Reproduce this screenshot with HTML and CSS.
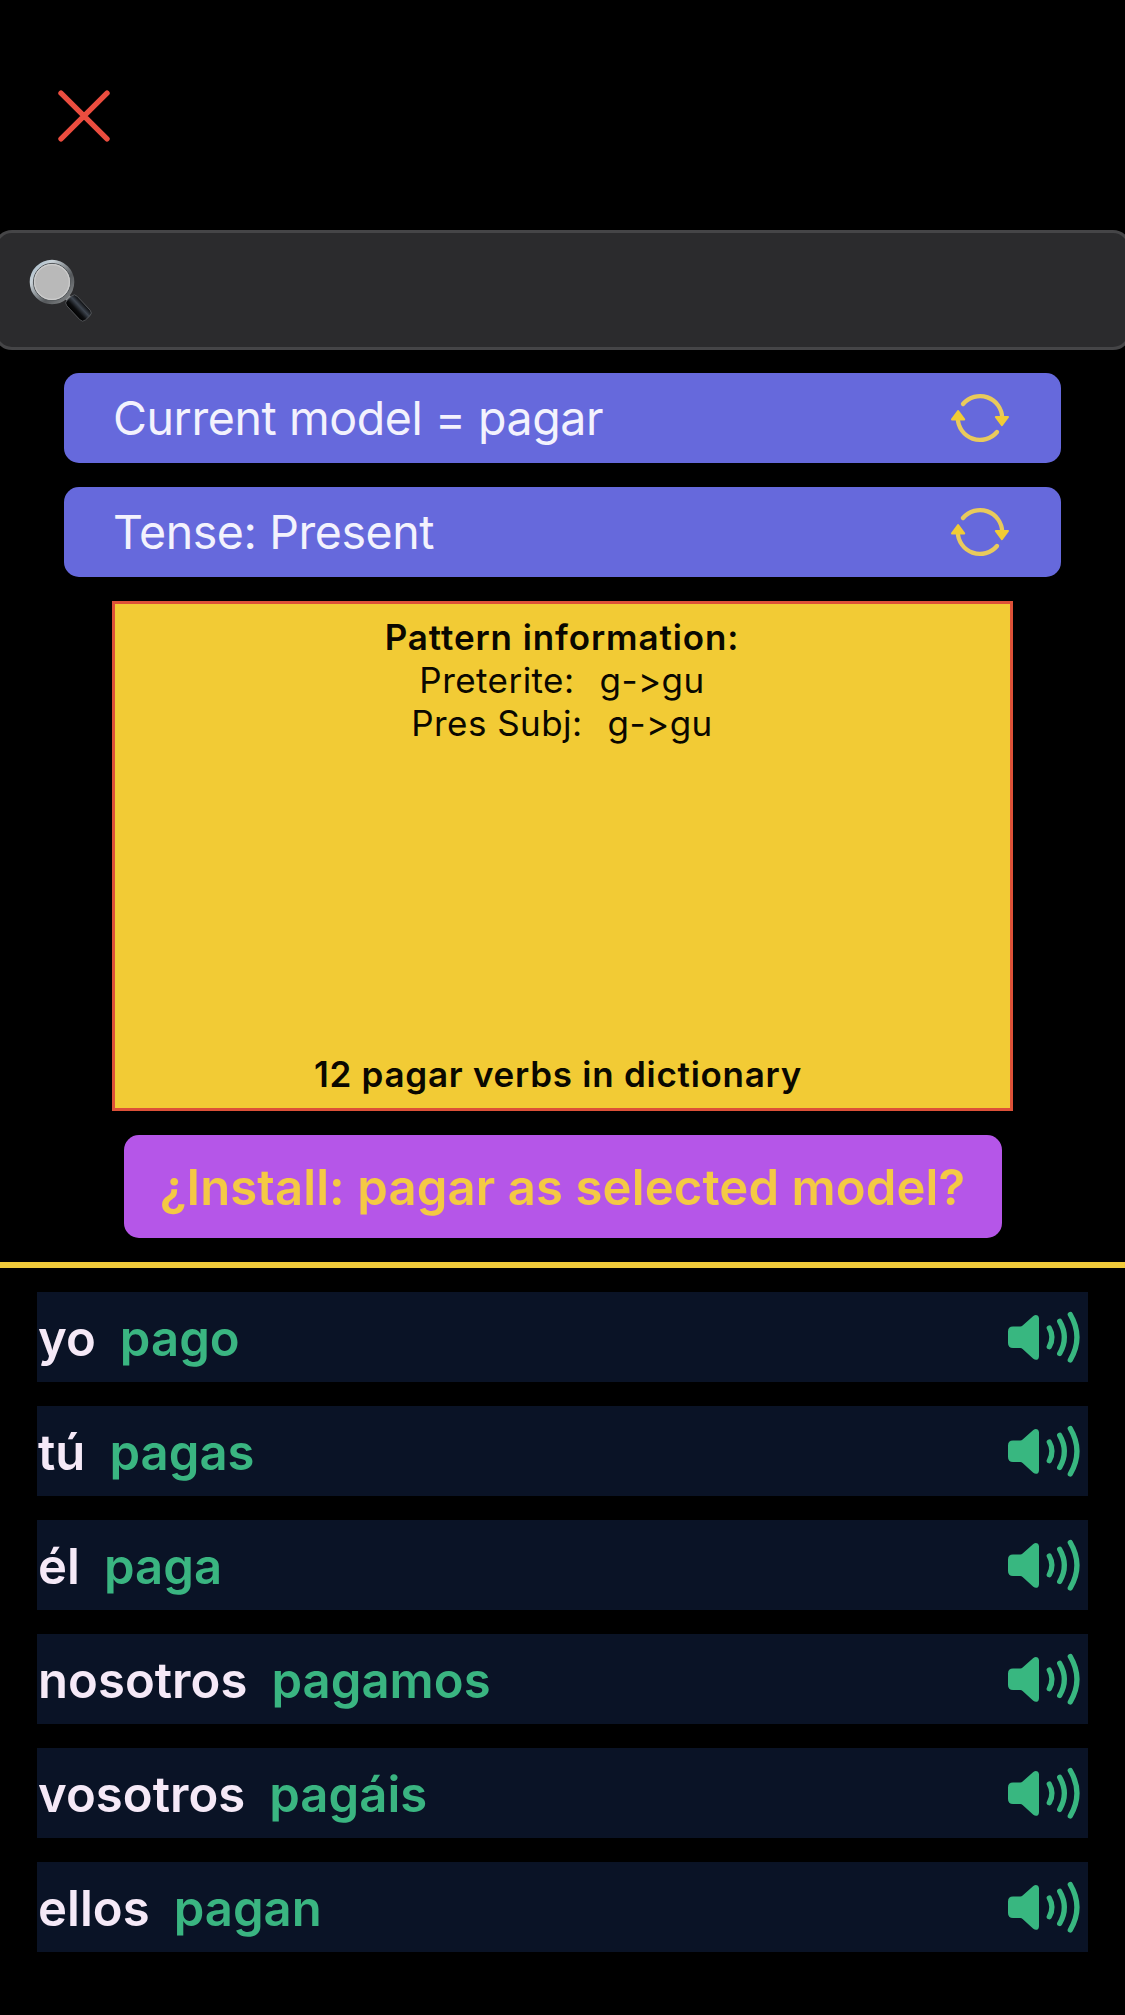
FILE: index.html
```
<!DOCTYPE html>
<html lang="en">
<head>
<meta charset="utf-8">
<title>Verb models</title>
<link rel="stylesheet" href="styles.css">
</head>
<body>
<svg class="defs" aria-hidden="true">
  <symbol id="cycle" viewBox="0 0 60 52">
    <g fill="none" stroke="#e9ca5c" stroke-width="4.3" stroke-linecap="round">
      <path d="M13 12A22.2 22.2 0 0 1 52.2 26"/>
      <path d="M47 40A22.2 22.2 0 0 1 7.8 26"/>
    </g>
    <g fill="#f2cc35" stroke="#f2cc35" stroke-width="2" stroke-linejoin="round">
      <path d="M45.8 25H58L51.9 33.2Z"/>
      <path d="M2 27.4H14.2L8.1 19Z"/>
    </g>
  </symbol>
  <symbol id="speaker" viewBox="0 0 74 54">
    <path fill="#38b780" d="M5 16.5H12.3Q13.6 16.5 14.6 15.5L25.3 5.9Q27.6 4.3 29.6 5.4Q31 6.2 31 8.4V46.2Q31 48.6 29.6 49.4Q27.6 50.5 25.3 48.8L14.6 39Q13.6 38 12.3 38H5Q0 38 0 33V21.5Q0 16.5 5 16.5Z"/>
    <g fill="none" stroke="#38b780" stroke-width="5.3" stroke-linecap="round">
      <path d="M41.3 18Q46.6 27.3 41.3 36.8"/>
      <path d="M51.7 11.3Q61 27.3 51.7 43.5"/>
      <path d="M62.3 4.5Q75.6 27.3 62.3 50"/>
    </g>
  </symbol>
</svg>

<header class="top">
  <button class="close" aria-label="Close">
    <svg width="52" height="52" viewBox="0 0 52 52"><path d="M3 3.2L49 48.8M49 3.2L3 48.8" fill="none" stroke="#eb4d3f" stroke-width="5.4" stroke-linecap="round"/></svg>
  </button>
</header>

<div class="search">
  <svg width="64" height="66" viewBox="0 0 64 66">
    <defs>
      <linearGradient id="rim" x1="0" y1="0" x2="1" y2="1"><stop offset="0" stop-color="#9db4c4"/><stop offset=".25" stop-color="#c9d2d8"/><stop offset=".65" stop-color="#55585b"/><stop offset="1" stop-color="#8b8e90"/></linearGradient>
      <linearGradient id="grip" x1="0" y1="0" x2="0" y2="1"><stop offset="0" stop-color="#0a0b0d"/><stop offset=".35" stop-color="#3f4650"/><stop offset=".7" stop-color="#0c0d0f"/><stop offset="1" stop-color="#000"/></linearGradient>
    </defs>
    <path d="M38 38L43 42.5" stroke="#8f9294" stroke-width="6"/>
    <circle cx="24" cy="24" r="20.4" fill="#b9b9b9" stroke="url(#rim)" stroke-width="3.8"/>
    <circle cx="24" cy="24" r="18.6" fill="none" stroke="#55595c" stroke-width="1"/>
    <circle cx="24" cy="24" r="17.4" fill="none" stroke="#cccccc" stroke-width="1.2"/>
    <rect x="37" y="43" width="27" height="14" rx="4" transform="rotate(47 50.5 50)" fill="url(#grip)" stroke="#5b5e61" stroke-width=".8"/>
  </svg>
</div>

<main class="picker">
  <button class="option">Current model = pagar<svg width="60" height="52"><use href="#cycle"/></svg></button>
  <button class="option">Tense: Present<svg width="60" height="52"><use href="#cycle"/></svg></button>

  <section class="info">
    <div class="patterns">
      <h2>Pattern information:</h2>
      <p>Preterite:<span class="change">g-&gt;gu</span></p>
      <p>Pres Subj:<span class="change">g-&gt;gu</span></p>
    </div>
    <p class="count">12 pagar verbs in dictionary</p>
  </section>

  <button class="install">¿Install: pagar as selected model?</button>
</main>

<ul class="forms">
  <li><span class="who">yo</span><span class="verb">pago</span><svg width="74" height="54"><use href="#speaker"/></svg></li>
  <li><span class="who">tú</span><span class="verb">pagas</span><svg width="74" height="54"><use href="#speaker"/></svg></li>
  <li><span class="who">él</span><span class="verb">paga</span><svg width="74" height="54"><use href="#speaker"/></svg></li>
  <li><span class="who">nosotros</span><span class="verb">pagamos</span><svg width="74" height="54"><use href="#speaker"/></svg></li>
  <li><span class="who">vosotros</span><span class="verb">pagáis</span><svg width="74" height="54"><use href="#speaker"/></svg></li>
  <li><span class="who">ellos</span><span class="verb">pagan</span><svg width="74" height="54"><use href="#speaker"/></svg></li>
</ul>
</body>
</html>
```
FILE: styles.css
```
* { box-sizing: border-box; margin: 0; padding: 0; }
html { background: #000; overflow-x: hidden; }
body {
  min-height: 2015px;
  overflow-x: hidden;
  background: #000;
  font-family: Inter, "Liberation Sans", sans-serif;
  font-feature-settings: "calt" 0;
}
button { border: 0; background: none; font: inherit; font-feature-settings: inherit; }
svg { display: block; flex: none; }
.defs { width: 0; height: 0; position: absolute; }

.top { height: 230px; padding: 90px 58px 0; }
.close { display: block; width: 52px; height: 52px; }

.search {
  display: flex;
  align-items: center;
  height: 120px;
  margin: 0 -6px;
  padding: 1px 31px 0;
  border: 3px solid #454547;
  border-radius: 18px;
  background: #2b2b2d;
}

.picker {
  display: flex;
  flex-direction: column;
  align-items: center;
  gap: 24px;
  padding: 23px 0 24px;
}
.option {
  display: flex;
  align-items: center;
  justify-content: space-between;
  width: 997px;
  height: 90px;
  padding: 0 51px 0 49px;
  border-radius: 15px;
  background: #6669dc;
  color: #f3f2fd;
  font-size: 46.5px;
  letter-spacing: -0.42px;
}
.info {
  display: flex;
  flex-direction: column;
  justify-content: space-between;
  width: 901px;
  height: 510px;
  padding: 12px 0;
  border: 3px solid #dd5138;
  background: #f2cb35;
  color: #0a0800;
  font-size: 35px;
  line-height: 43px;
  letter-spacing: 0.45px;
  text-align: center;
}
.info h2 {
  padding-right: 1px;
  font-size: 35px;
  font-weight: 600;
  letter-spacing: 0.9px;
}
.patterns p { padding-right: 1px; }
.change { margin-left: 25px; }
.count { padding-right: 9px; font-weight: 600; letter-spacing: 0.74px; }
.install {
  width: 878px;
  height: 103px;
  padding-top: 1px;
  border-radius: 15px;
  background: #b556e8;
  color: #f4c944;
  font-size: 49px;
  font-weight: 600;
  letter-spacing: 0.12px;
}

.forms {
  display: grid;
  gap: 24px;
  padding: 24px 37px;
  border-top: 6px solid #f0ca3a;
  list-style: none;
}
.forms li {
  display: flex;
  align-items: center;
  height: 90px;
  padding: 0 6px 0 1px;
  background: #0a1326;
  font-size: 49px;
  font-weight: 600;
  letter-spacing: 0.05px;
}
.who, .verb { padding-top: 2px; }
.who { margin-right: 24px; color: #f5e9f7; }
.verb { color: #3ab581; }
.forms svg { margin-left: auto; }
```
